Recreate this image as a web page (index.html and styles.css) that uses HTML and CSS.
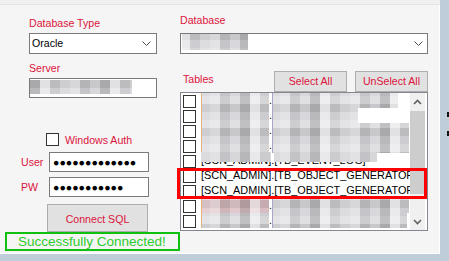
FILE: index.html
```html
<!DOCTYPE html>
<html lang="en">
<head>
  <meta charset="UTF-8" />
  <meta name="viewport" content="width=device-width, initial-scale=1.0"/>
  <title>SQL Connect</title>
  <link rel="stylesheet" href="styles.css">
</head>
<body>
  <div class="window">
    <div class="panel">
      <div class="col-left">
        <label class="lbl lbl-type">Database Type</label>
        <div class="combo combo-type">
          <span class="combo-text">Oracle</span>
          <svg class="chev" width="9" height="5" viewBox="0 0 9 5"><path d="M0.5 0.5 L4.5 4.5 L8.5 0.5" fill="none" stroke="#505050" stroke-width="1"/></svg>
        </div>
        <label class="lbl lbl-server">Server</label>
        <div class="textbox server"><span class="blur blur-server"></span></div>

        <div class="auth-row">
          <span class="check"></span>
          <span class="lbl auth-lbl">Windows Auth</span>
        </div>
        <div class="field-row">
          <span class="lbl field-lbl">User</span>
          <div class="textbox pass">●●●●●●●●●●●●●</div>
        </div>
        <div class="field-row pw-row">
          <span class="lbl field-lbl">PW</span>
          <div class="textbox pass">●●●●●●●●●●●</div>
        </div>
        <button class="btn btn-connect">Connect SQL</button>
        <div class="status">Successfully Connected!</div>
      </div>

      <div class="col-right">
        <label class="lbl lbl-db">Database</label>
        <div class="combo combo-db">
          <span class="blur blur-db"></span>
          <svg class="chev" width="9" height="5" viewBox="0 0 9 5"><path d="M0.5 0.5 L4.5 4.5 L8.5 0.5" fill="none" stroke="#505050" stroke-width="1"/></svg>
        </div>

        <div class="tables-bar">
          <span class="lbl lbl-tables">Tables</span>
          <div class="bar-btns">
            <button class="btn btn-small">Select All</button>
            <button class="btn btn-small">UnSelect All</button>
          </div>
        </div>

        <div class="list-wrap">
          <div class="list">
            <div class="rows">
              <div class="row"><span class="check"></span><span class="blur ba"></span><span class="sep">.</span><span class="blur bb" style="width:126px"></span></div>
              <div class="row"><span class="check"></span><span class="blur ba"></span><span class="sep">.</span><span class="blur bb" style="width:86px"></span></div>
              <div class="row"><span class="check"></span><span class="blur ba"></span><span class="sep">.</span><span class="blur bb" style="width:137px"></span></div>
              <div class="row"><span class="check"></span><span class="blur ba"></span><span class="sep">.</span><span class="blur bb" style="width:137px"></span></div>
              <div class="row"><span class="check"></span><span class="name masked"><span class="seg seg-a">[SCN_ADMIN]</span>.<span class="seg seg-b">[TB_EVENT_LOG]</span></span></div>
              <div class="row"><span class="check"></span><span class="name">[SCN_ADMIN].[TB_OBJECT_GENERATOR_DETAIL]</span></div>
              <div class="row"><span class="check"></span><span class="name">[SCN_ADMIN].[TB_OBJECT_GENERATOR_HISTORY]</span></div>
              <div class="row"><span class="check"></span><span class="blur ba warm"></span><span class="sep">.</span><span class="blur bb" style="width:137px"></span></div>
              <div class="row"><span class="check"></span><span class="blur ba"></span><span class="sep">.</span><span class="blur bb" style="width:135px"></span></div>
            </div>
            <div class="scrollbar">
              <div class="sb-arrow">
                <svg width="9" height="6" viewBox="0 0 9 6"><path d="M1 5 L4.5 1.5 L8 5" fill="none" stroke="#606060" stroke-width="1.6"/></svg>
              </div>
              <div class="sb-thumb"></div>
              <div class="sb-arrow down">
                <svg width="9" height="6" viewBox="0 0 9 6"><path d="M1 1 L4.5 4.5 L8 1" fill="none" stroke="#606060" stroke-width="1.6"/></svg>
              </div>
            </div>
          </div>
          <div class="highlight"></div>
        </div>
      </div>
    </div>
  </div>
  <div class="side"><span class="pip"></span><span class="pip"></span></div>
</body>
</html>
```

FILE: styles.css
```css
body {
  margin: 0;
  height: 261px;
  overflow: hidden;
  display: flex;
  background: #bfcddb;
  font-family: 'Liberation Sans', Arial, sans-serif;
  font-size: 10.6px;
  color: #000;
}
.window {
  width: 440px;
  height: 254px;
  padding-top: 4px;
  box-sizing: border-box;
  background: #f0f0f0;
}
.panel {
  height: 250px;
  box-sizing: border-box;
  background: #f5f5f5;
  border-top: 1px solid #e3e3e3;
  border-right: 1px solid #fff;
  border-bottom: 1px solid #fff;
  display: flex;
}
.lbl {
  display: block;
  line-height: 13px;
  color: crimson;
  white-space: nowrap;
}

/* left side */
.col-left {
  margin-left: 5px;
  width: 175px;
  display: flex;
  flex-direction: column;
}
.lbl-type {
  margin: 12px 0 0 24px;
}
.combo {
  height: 21px;
  box-sizing: border-box;
  border: 1px solid #7a7a7a;
  background: #fff;
  display: flex;
  align-items: center;
}
.combo .chev {
  margin-left: auto;
  margin-right: 5px;
}
.combo-type {
  margin: 3px 0 0 24px;
  width: 128px;
}
.combo-text {
  padding-left: 2px;
  line-height: 13px;
}
.lbl-server {
  margin: 8px 0 0 24px;
}
.textbox {
  height: 20px;
  box-sizing: border-box;
  border: 1px solid #7a7a7a;
  background: #fff;
}
.server {
  margin: 3px 0 0 24px;
  width: 128px;
}
.blur-server {
  display: block;
  width: 102px;
  height: 14px;
  margin-top: 1px;
}
.check {
  width: 13px;
  height: 13px;
  box-sizing: border-box;
  border: 1px solid #333;
  background: #fff;
  flex: none;
}
.auth-row {
  display: flex;
  align-items: flex-start;
  margin: 35px 0 0 41px;
}
.auth-lbl {
  margin: 1px 0 0 6px;
}
.field-row {
  display: flex;
  align-items: center;
  margin: 5px 0 0 16px;
}
.field-lbl {
  width: 28px;
}
.pass {
  width: 100px;
  padding-left: 3px;
  line-height: 18px;
  color: #000;
}
.btn {
  font-family: inherit;
  font-size: 10.6px;
  color: crimson;
  background: #e1e1e1;
  border: 1px solid #adadad;
  padding: 0;
  margin: 0;
  line-height: 13px;
}
.btn-connect {
  margin: 7px 0 0 42px;
  width: 101px;
  height: 28px;
  padding-top: 3px;
}
.status {
  height: 19px;
  box-sizing: border-box;
  border: 2px solid #10c010;
  color: #2ccc2c;
  font-size: 13.5px;
  line-height: 15px;
  padding-left: 11px;
  white-space: nowrap;
}

/* right side */
.col-right {
  width: 248px;
  display: flex;
  flex-direction: column;
}
.lbl-db {
  margin-top: 9px;
}
.combo-db {
  margin-top: 6px;
  align-items: flex-start;
}
.combo-db .chev {
  align-self: center;
  margin-right: 4px;
}
.blur-db {
  display: block;
  width: 66px;
  height: 16px;
  margin-left: 1px;
}
.tables-bar {
  display: flex;
  height: 21px;
  margin-top: 17px;
}
.lbl-tables {
  margin: 2px 0 0 3px;
}
.bar-btns {
  margin-left: auto;
  display: flex;
  gap: 8px;
}
.btn-small {
  width: 73px;
  height: 21px;
}
.list-wrap {
  position: relative;
}
.list {
  height: 139px;
  box-sizing: border-box;
  border: 1px solid #828790;
  background: #fff;
  display: flex;
}
.rows {
  flex: 1;
  min-width: 0;
  overflow: hidden;
}
.row {
  display: flex;
  align-items: flex-start;
  height: 15px;
  white-space: nowrap;
}
.row .check {
  margin: 2px 0 0 2px;
}
.name {
  margin-left: 5px;
  font-size: 10.9px;
  line-height: 15px;
}
.seg {
  position: relative;
}
.masked .seg::after {
  content: '';
  position: absolute;
  left: 0;
  right: 0;
  top: -2px;
  height: 10px;
  background-color: #d2d2d6;
  background-image:
    repeating-linear-gradient(90deg, rgba(255,255,255,.35) 0 10px, rgba(0,0,0,.07) 10px 20px, rgba(255,255,255,.1) 20px 30px, rgba(0,0,0,.13) 30px 40px, rgba(255,255,255,.5) 40px 50px, rgba(0,0,0,.03) 50px 60px, rgba(255,255,255,.2) 60px 70px);
  background-attachment: fixed;
}
.masked .seg-b::after {
  right: -11px;
}
.blur {
  background-color: #d2d2d6;
  background-image:
    repeating-linear-gradient(90deg, rgba(255,255,255,.35) 0 10px, rgba(0,0,0,.07) 10px 20px, rgba(255,255,255,.1) 20px 30px, rgba(0,0,0,.13) 30px 40px, rgba(255,255,255,.5) 40px 50px, rgba(0,0,0,.03) 50px 60px, rgba(255,255,255,.2) 60px 70px),
    repeating-linear-gradient(180deg, rgba(255,255,255,.25) 0 8px, rgba(0,0,0,.08) 8px 16px, rgba(255,255,255,.05) 16px 24px);
  background-attachment: fixed;
}
.ba {
  width: 68px;
  height: 15px;
  margin-left: 5px;
  box-shadow: inset 1px 0 #e8b47c;
}
.ba.warm {
  background-color: #dcc0c4;
}
.sep {
  width: 3px;
  line-height: 15px;
  text-align: center;
}
.bb {
  height: 15px;
  box-shadow: inset 1px 0 #a6a6c6;
}
.scrollbar {
  width: 15px;
  margin-right: 2px;
  background: #f0f0f0;
  display: flex;
  flex-direction: column;
}
.sb-arrow {
  height: 17px;
  display: flex;
  align-items: center;
  justify-content: center;
}
.sb-arrow.down {
  margin-top: auto;
}
.sb-thumb {
  height: 83px;
  margin-top: 1px;
  background: #cdcdcd;
}
.highlight {
  position: absolute;
  left: -3px;
  top: 76px;
  width: 250px;
  height: 31px;
  box-sizing: border-box;
  border: 3px solid #f00;
}

/* strip at the right edge */
.side {
  flex: 1;
  padding: 112px 0 0 7px;
  display: flex;
  flex-direction: column;
  gap: 14px;
}
.pip {
  width: 2px;
  height: 5px;
  background: #111;
}
```
